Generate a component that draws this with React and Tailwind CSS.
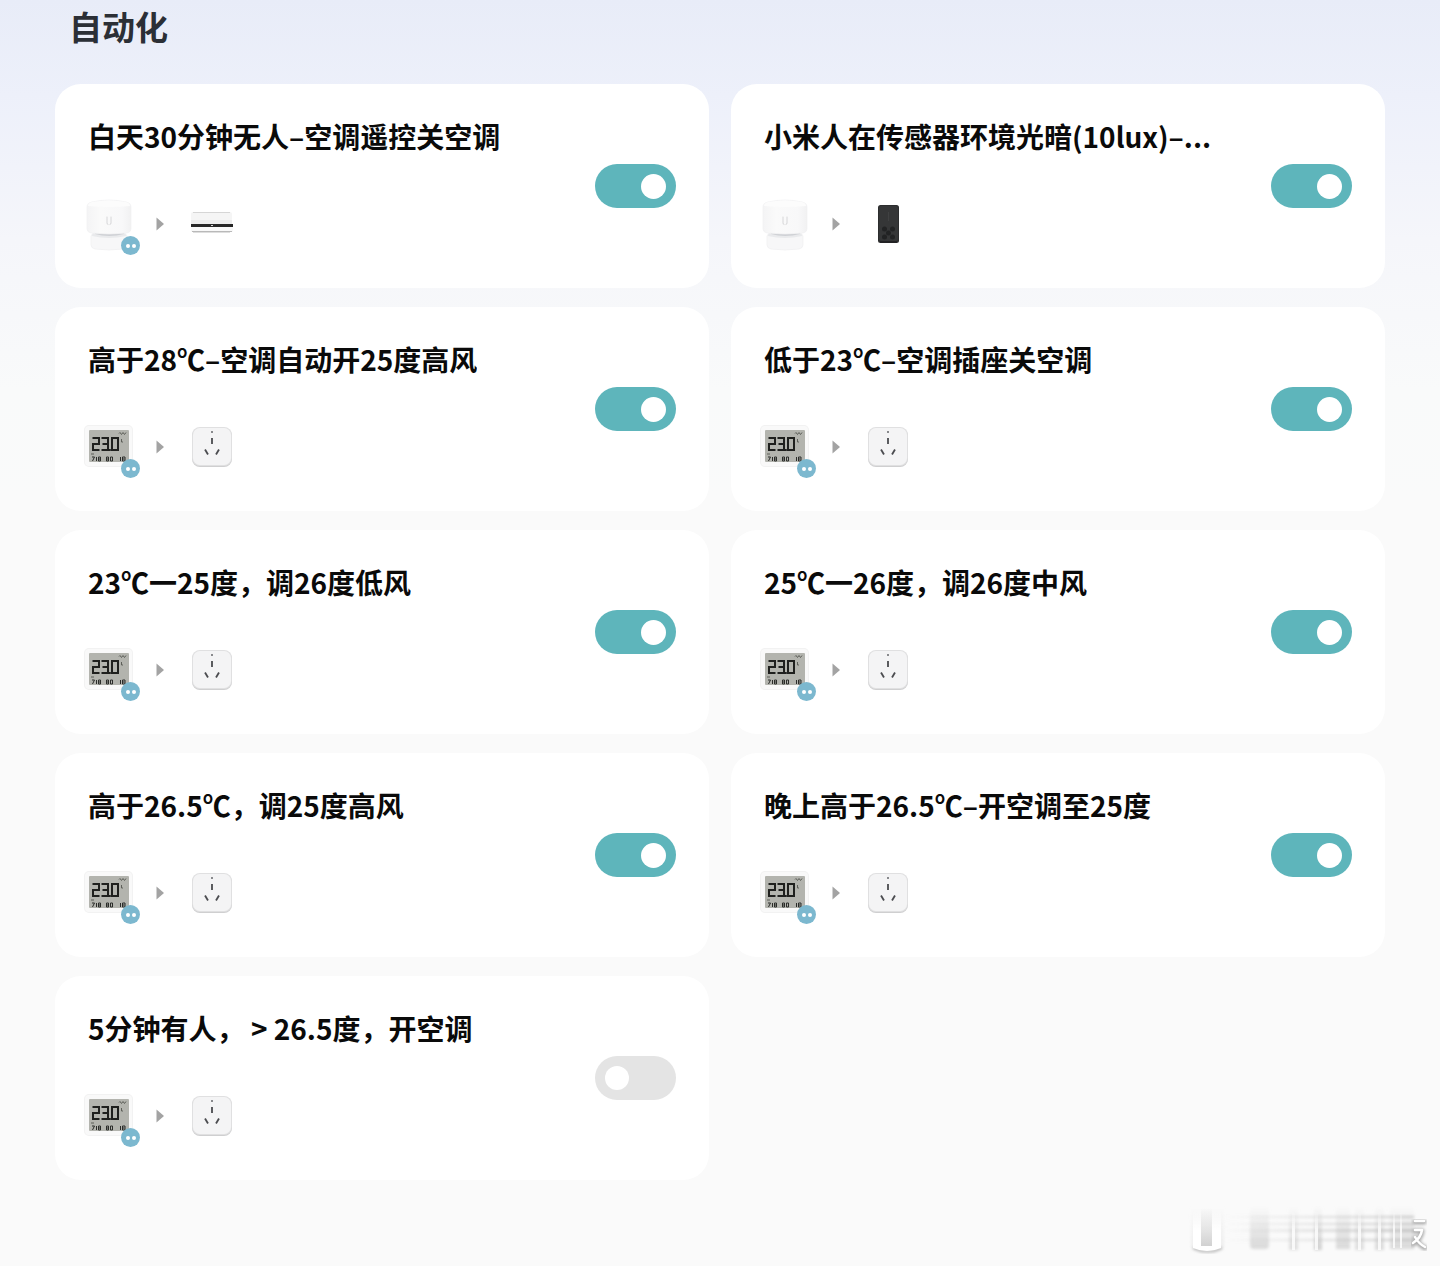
import { useState } from "react";
import clsx from "clsx";

const AUTOMATIONS = [
    { id: 1, title: "白天30分钟无人–空调遥控关空调", from: "sensor", to: "aircon", linked: true, on: true },
    { id: 2, title: "小米人在传感器环境光暗(10lux)–...", from: "sensor", to: "remote", linked: false, on: true },
    { id: 3, title: "高于28℃–空调自动开25度高风", from: "thermo", to: "socket", linked: true, on: true },
    { id: 4, title: "低于23℃–空调插座关空调", from: "thermo", to: "socket", linked: true, on: true },
    { id: 5, title: "23℃一25度，调26度低风", from: "thermo", to: "socket", linked: true, on: true },
    { id: 6, title: "25℃一26度，调26度中风", from: "thermo", to: "socket", linked: true, on: true },
    { id: 7, title: "高于26.5℃，调25度高风", from: "thermo", to: "socket", linked: true, on: true },
    { id: 8, title: "晚上高于26.5℃–开空调至25度", from: "thermo", to: "socket", linked: true, on: true },
    { id: 9, title: "5分钟有人， > 26.5度，开空调", from: "thermo", to: "socket", linked: true, on: false },
];

function SensorIcon() {
    return (
        <svg viewBox="0 0 54 54" className="size-full" aria-hidden="true">
            <defs>
                <linearGradient id="sensorBody" x1="0" x2="1" y1="0" y2="0">
                    <stop offset="0" stopColor="#f4f4f5" />
                    <stop offset="0.3" stopColor="#fafafa" />
                    <stop offset="0.8" stopColor="#f8f8f9" />
                    <stop offset="1" stopColor="#f1f1f2" />
                </linearGradient>
            </defs>
            <path d="M9 39q0-2 4-3h28q4 1 4 3v9q0 3-4 4q-14 2-28 0q-4-1-4-4z" fill="#f7f7f8" stroke="#efeff0" strokeWidth="0.7" />
            <path d="M11 35h32l1 4q-17 4-34 0z" fill="#e9eaec" />
            <path d="M13 35q14 4 29 0v2q-15 4-29 0z" fill="#cfd1d5" />
            <path d="M5 10q0-4 5-5q17-4 34 0q5 1 5 5v22q0 3-4 4q-18 2-36 0q-4-1-4-4z" fill="url(#sensorBody)" stroke="#f1f1f2" strokeWidth="0.7" />
            <path d="M6 9q0-3 4-4q17-3 34 0q4 1 4 4q-21 2-42 0z" fill="#fcfcfc" />
            <path d="M25 20v6q0 1.500 1 1.500M29 20v6q0 1.500-1 1.500" stroke="#d6d6d8" strokeWidth="1" fill="none" strokeLinecap="round" />
        </svg>
    );
}

function AirconIcon() {
    return (
        <svg viewBox="0 0 54 54" className="size-full" aria-hidden="true">
            <rect x="7" y="15" width="41" height="9" rx="2" fill="#f5f5f5" />
            <path d="M9 15.500h37" stroke="#d6d6d6" strokeWidth="1" />
            <rect x="7" y="23" width="41" height="4" fill="#ececec" />
            <rect x="7" y="27" width="42" height="3" fill="#262626" />
            <rect x="27" y="28" width="2" height="1" fill="#d8d8d8" />
            <rect x="7" y="30" width="42" height="5" rx="1" fill="#f8f8f8" />
            <path d="M8 34.500h40" stroke="#b9b9b9" strokeWidth="1" />
            <path d="M9 35.500h37" stroke="#dedede" strokeWidth="1" />
        </svg>
    );
}

function RemoteIcon() {
    return (
        <svg viewBox="0 0 54 54" className="size-full" aria-hidden="true">
            <rect x="18" y="8" width="21" height="38" rx="2.500" fill="#2c2d2e" />
            <rect x="19" y="9" width="19" height="35" rx="2" fill="#353637" />
            <path d="M20 45h17" stroke="#18191a" strokeWidth="1" />
            <path d="M28.500 15v9" stroke="#404142" strokeWidth="1" />
            <circle cx="24.500" cy="32" r="2.500" fill="#222324" />
            <circle cx="32.500" cy="32" r="2.500" fill="#222324" />
            <circle cx="28.500" cy="36" r="2.500" fill="#222324" />
            <circle cx="24.500" cy="40" r="2.500" fill="#222324" />
            <circle cx="32.500" cy="40" r="2.500" fill="#222324" />
        </svg>
    );
}

function ThermoIcon() {
    return (
        <svg viewBox="0 0 54 54" className="size-full" aria-hidden="true">
            <rect x="2" y="5" width="49" height="42" rx="5" fill="#f2f2f2" />
            <rect x="3" y="6" width="47" height="40" rx="4" fill="#f9f9f9" />
            <rect x="7" y="10" width="40" height="32" rx="1" fill="#b3b4ae" />
            {/* seven-segment reading */}
            <g stroke="#1f201e" strokeWidth="2" fill="none">
                <path d="M10.500 18h6.500v6h-6v6h6.500" />
                <path d="M19.500 18h6.500v12h-6.500M20.500 24h5.500" />
                <path d="M30 18h6v12h-6z" />
                <path d="M27.800 29v2" />
            </g>
            <g stroke="#5d5f59" strokeWidth="1" fill="none">
                <path d="M37 13.500l1-1l1.500 2l1.500-2l1.500 2l1.500-2" />
                <path d="M39.500 19v3h1.500" />
                <path d="M9 34h3" />
            </g>
            <g stroke="#2b2c2a" strokeWidth="1" fill="none">
                <path d="M10 37h2.500l-2 4M14.500 37v4M16.500 37h2v4h-2zM16.500 39h2" />
                <path d="M24.500 37h2v4h-2zM28.500 37h2v4h-2zM24.500 39h2" />
                <path d="M38.500 37v4M40.500 37h2.500v4h-2.500zM40.500 39h2" />
            </g>
        </svg>
    );
}

function SocketIcon() {
    return (
        <svg viewBox="0 0 54 54" className="size-full" aria-hidden="true">
            <rect x="8" y="8" width="40" height="39" rx="8" fill="#cfcfd0" />
            <rect x="8" y="7" width="40" height="39" rx="8" fill="#e0e0e1" />
            <rect x="9" y="8" width="38" height="37" rx="7" fill="#f4f4f5" />
            <circle cx="28" cy="12" r="1" fill="#66676a" />
            <g stroke="#4a4b4f" strokeWidth="1.800" fill="none">
                <path d="M28 18v6" />
                <path d="M21 29.500l3 5" />
                <path d="M35 29.500l-3 5" />
            </g>
        </svg>
    );
}

const DEVICE_ICONS = {
    sensor: SensorIcon,
    aircon: AirconIcon,
    remote: RemoteIcon,
    thermo: ThermoIcon,
    socket: SocketIcon,
};

function Device({ type, badge }) {
    const Icon = DEVICE_ICONS[type];

    return (
        <div className="relative size-[54px]">
            <Icon />
            {badge && (
                <span className="absolute -right-1 -bottom-1 flex size-[19px] items-center justify-center gap-0.5 rounded-full bg-[#7cb8cf]">
                    <span className="size-1 rounded-full bg-white" />
                    <span className="size-1 rounded-full bg-white" />
                </span>
            )}
        </div>
    );
}

function AutomationCard({ title, from, to, linked, on }) {
    const [enabled, setEnabled] = useState(on);

    return (
        <li className="flex items-center justify-between rounded-[26px] bg-white pr-[33px] pl-[27px]">
            <div className="min-w-0 pt-8 pb-[37px]">
                <h2 className="truncate pl-1.5 text-[28px] leading-10 font-bold text-[#0a0a0a]">{title}</h2>
                <div className="mt-[41px] flex items-center gap-5">
                    <Device type={from} badge={linked} />
                    <svg viewBox="0 0 8 14" className="h-3.5 w-2" aria-hidden="true">
                        <path d="M0.500 0.500L8 7L0.500 13.500z" fill="#a3a3a3" />
                    </svg>
                    <Device type={to} />
                </div>
            </div>
            <button
                type="button"
                role="switch"
                aria-checked={enabled}
                aria-label={title}
                onClick={() => setEnabled((current) => !current)}
                className={clsx(
                    "flex h-11 w-[81px] shrink-0 cursor-pointer items-center rounded-full px-2.5 transition-colors",
                    enabled ? "justify-end bg-[#5eb5bb]" : "justify-start bg-[#e4e4e4]",
                )}
            >
                <span className={clsx("rounded-full bg-white", enabled ? "size-[25px]" : "size-6")} />
            </button>
        </li>
    );
}

function Watermark() {
    return (
        <svg viewBox="0 0 240 48" className="h-12 w-60" aria-hidden="true">
            <defs>
                <linearGradient id="fadeGray" x1="0" x2="0" y1="0" y2="1">
                    <stop offset="0" stopColor="#cccccc" stopOpacity="0" />
                    <stop offset="1" stopColor="#cccccc" stopOpacity="0.9" />
                </linearGradient>
                <linearGradient id="fadeWhite" x1="0" x2="0" y1="0" y2="1">
                    <stop offset="0" stopColor="#ffffff" stopOpacity="0" />
                    <stop offset="0.5" stopColor="#ffffff" />
                </linearGradient>
                <linearGradient id="fadeLine" x1="0" x2="1" y1="0" y2="0">
                    <stop offset="0" stopColor="#b4b4b4" stopOpacity="0" />
                    <stop offset="1" stopColor="#b4b4b4" stopOpacity="0.7" />
                </linearGradient>
                <filter id="soft" x="-10%" y="-10%" width="120%" height="120%">
                    <feGaussianBlur stdDeviation="1.500" />
                </filter>
            </defs>
            <g filter="url(#soft)">
                <rect x="3" y="0" width="33" height="42" fill="url(#fadeGray)" opacity="0.3" />
                <rect x="62" y="0" width="19" height="43" rx="4" fill="url(#fadeGray)" opacity="0.8" />
                <rect x="101" y="0" width="9" height="44" fill="url(#fadeGray)" opacity="0.7" />
                <rect x="126" y="0" width="8" height="44" fill="url(#fadeGray)" />
                <rect x="148" y="0" width="14" height="43" fill="url(#fadeGray)" opacity="0.8" />
                <rect x="167" y="0" width="9" height="44" fill="url(#fadeGray)" opacity="0.7" />
                <rect x="187" y="0" width="9" height="44" fill="url(#fadeGray)" opacity="0.8" />
                <rect x="202" y="0" width="24" height="43" fill="url(#fadeGray)" opacity="0.8" />
                <path d="M5 42q15 7 29 0" stroke="#a8a8a8" strokeWidth="2" fill="none" />
            </g>
            <path d="M5 4h28v38q-14 6-28 0z" fill="url(#fadeWhite)" />
            <rect x="13" y="2" width="11" height="38" fill="url(#fadeGray)" />
            <g fill="url(#fadeLine)" filter="url(#soft)">
                <rect x="34" y="10" width="192" height="2" />
                <rect x="34" y="17" width="192" height="2" />
                <rect x="34" y="23" width="192" height="3" />
                <rect x="34" y="33" width="192" height="2" />
            </g>
            <g fill="url(#fadeWhite)" opacity="0.8">
                <rect x="104" y="4" width="3" height="40" />
                <rect x="127" y="4" width="3" height="40" />
                <rect x="170" y="4" width="3" height="40" />
                <rect x="190" y="4" width="3" height="40" />
                <rect x="205" y="4" width="2" height="38" />
                <rect x="212" y="4" width="2" height="38" />
            </g>
            <g fill="none" strokeLinecap="round" strokeLinejoin="round">
                <path d="M227 16h9M227 25h7q-1 8-9 13M227 32q4 7 10 10" stroke="#ababab" strokeWidth="5" filter="url(#soft)" />
                <path d="M227 15h9M227 24h7q-1 8-9 13M227 31q4 7 10 10" stroke="#ffffff" strokeWidth="2.500" />
            </g>
        </svg>
    );
}

export default function App() {
    return (
        <div className="min-h-screen bg-[#fafafa] bg-[linear-gradient(#e8ecf8_0px,#edf0fa_95px,#f5f6fa_240px,#f9fafa_390px,#fafafa_500px)] font-['Noto_Sans_CJK_SC',sans-serif]">
            <main className="px-[55px] pt-1.5">
                <h1 className="pl-3.5 text-[33px] leading-10 font-bold text-[#2b2f36]">自动化</h1>
                <ul className="mt-[38px] grid grid-cols-2 gap-x-[22px] gap-y-[19px]">
                    {AUTOMATIONS.map((item) => (
                        <AutomationCard key={item.id} {...item} />
                    ))}
                </ul>
            </main>
            <footer className="flex justify-end pt-[26px] pr-3 pb-3">
                <Watermark />
            </footer>
        </div>
    );
}
